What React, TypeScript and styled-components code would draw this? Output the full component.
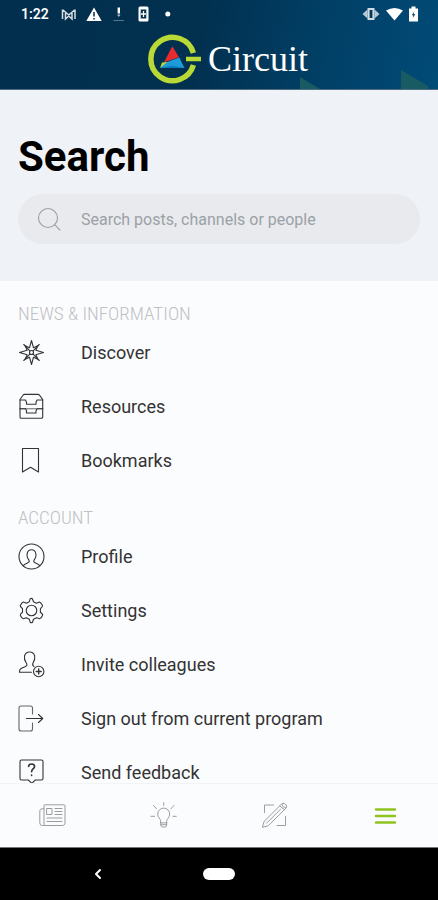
import React from "react";
import styled, { createGlobalStyle } from "styled-components";

const GlobalStyle = createGlobalStyle`
  *, *::before, *::after { box-sizing: border-box; }
  body {
    margin: 0;
    background: #fbfcfe;
    font-family: Roboto, "Liberation Sans", sans-serif;
    color: #2b2b2b;
  }
`;

const Screen = styled.div`
  display: flex;
  flex-direction: column;
  height: 100vh;
`;

const Header = styled.header`
  position: relative;
  flex: none;
  background: linear-gradient(100deg, #022f4e 0%, #02304f 45%, #013e64 70%, #014b77 100%);
  border-bottom: 1px solid #506a80;
  overflow: hidden;
`;

const Triangles = styled.svg`
  position: absolute;
  right: 0;
  bottom: 0;
  width: 140px;
  height: 20px;
`;

const StatusBar = styled.div`
  display: flex;
  align-items: center;
  justify-content: space-between;
  height: 28px;
  padding: 0 18px 0 21px;
  color: #fff;
  font-size: 14px;
  font-weight: 600;
`;

const StatusGroup = styled.div`
  display: flex;
  align-items: center;
  gap: 12px;
`;

const Brand = styled.div`
  display: flex;
  align-items: center;
  justify-content: center;
  gap: 6px;
  height: 61px;
  padding-left: 18px;
  color: #fff;
  font-family: "Liberation Serif", serif;
  font-size: 36px;
  line-height: 60px;
`;

const SearchPanel = styled.section`
  flex: none;
  padding: 42px 18px 37px;
  background: #eff3f7;
`;

const Title = styled.h1`
  margin: 0;
  color: #000;
  font-size: 42px;
  font-weight: 700;
  line-height: 50px;
`;

const SearchField = styled.label`
  display: flex;
  align-items: center;
  gap: 18px;
  height: 50px;
  margin-top: 12px;
  padding: 0 18px;
  border-radius: 25px;
  background: #e8eaed;
  color: #9aa0a5;
`;

const SearchInput = styled.input`
  flex: 1;
  min-width: 0;
  padding: 0;
  border: 0;
  outline: 0;
  background: transparent;
  color: #2b2b2b;
  font: 400 16px Roboto, "Liberation Sans", sans-serif;
  &::placeholder { color: #9ba1a7; opacity: 1; }
`;

const Menu = styled.main`
  flex: 1;
  min-height: 0;
  display: flex;
  flex-direction: column;
  gap: 20px;
  padding: 22px 18px 0;
  overflow-y: auto;
  scrollbar-width: none;
`;

const SectionTitle = styled.h2`
  margin: 0;
  color: #bfc1c3;
  font-family: "Roboto Condensed", Roboto, sans-serif;
  font-size: 19px;
  font-weight: 300;
  line-height: 22px;
`;

const List = styled.ul`
  margin: 0;
  padding: 0;
  list-style: none;
`;

const MenuButton = styled.button`
  display: flex;
  align-items: center;
  gap: 36px;
  width: 100%;
  height: 54px;
  padding: 0;
  border: 0;
  background: transparent;
  color: #333;
  font: 400 18px Roboto, "Liberation Sans", sans-serif;
  text-align: left;
  cursor: pointer;
`;

const Tabs = styled.nav`
  flex: none;
  display: flex;
  justify-content: space-between;
  height: 64px;
  padding: 0 39px;
  border-top: 1px solid #f1f3f5;
  background: #fbfcfe;
`;

const Tab = styled.button<{ $active?: boolean }>`
  display: flex;
  align-items: center;
  justify-content: center;
  padding: 0;
  border: 0;
  background: transparent;
  color: ${(p) => (p.$active ? "#8fc31f" : "#9b9c9d")};
  cursor: pointer;
`;

const SystemBar = styled.footer`
  flex: none;
  display: grid;
  grid-template-columns: 1fr auto 1fr;
  align-items: center;
  height: 53px;
  border-top: 1px solid #777;
  background: #000;
`;

const BackButton = styled.button`
  justify-self: center;
  display: flex;
  margin-right: 8px;
  padding: 0;
  border: 0;
  background: transparent;
  color: #fff;
`;

const HomeButton = styled.button`
  width: 32px;
  height: 12px;
  padding: 0;
  border: 0;
  border-radius: 6px;
  background: #fff;
`;

const Line = styled.svg`
  flex: none;
  fill: none;
  stroke: currentColor;
  stroke-linejoin: round;
  stroke-linecap: round;
`;

type IconProps = { children: React.ReactNode; width?: number; weight?: number };

const Icon = ({ children, width = 27, weight = 1.1 }: IconProps) => (
  <Line width={width} height={width} viewBox="0 0 27 27" strokeWidth={weight} aria-hidden="true">
    {children}
  </Line>
);

const Discover = () => (
  <Icon>
    <path d="M13.5 1.5 15.5 8.8 19.8 6.8 17.9 11.3 25.5 13.5 17.9 15.7 19.8 20.2 15.5 18.2 13.5 25.5 11.5 18.2 7.2 20.2 9.1 15.7 1.5 13.5 9.1 11.3 7.2 6.8 11.5 8.8Z" />
    <path d="M5.8 5.5 11.8 11.8M21.2 5.5l-6 6.3M5.8 21.5l6-6.3M21.2 21.5l-6-6.3" />
    <circle cx="13.5" cy="13.5" r="2" />
  </Icon>
);

const Resources = () => (
  <Icon>
    <path d="M2 6.5 5 2.2Q5.5 1.4 6.5 1.4H20Q21 1.4 21.5 2.2L24.7 6.5V24Q24.7 25.3 23.2 25.3H3.5Q2 25.3 2 24Z" />
    <path d="M2 7H7.5L8.5 9.2V11.3H18V9.2L19 7H24.7M2 15.7H7.5L8.5 17.7V20H18V17.7L19 15.7H24.7" />
    <path d="M2 15.7H24.7" opacity=".7" />
  </Icon>
);

const Bookmark = () => (
  <Icon>
    <path d="M4.5 1.5H20.5V25L12.5 20.3 4.5 25Z" />
  </Icon>
);

const Profile = () => (
  <Icon>
    <circle cx="13.5" cy="13.5" r="12.5" />
    <path d="M5.2 22.8C6 20.6 10.7 20 11.2 18.8 11.5 17.3 10.5 16.5 9.7 15 9 13.6 8.8 12.2 9.2 10.5 9.7 8.2 11.3 6.8 13.5 6.8S17.3 8.2 17.8 10.5C18.2 12.2 18 13.6 17.3 15 16.5 16.5 15.5 17.3 15.8 18.8 16.3 20 21 20.6 21.8 22.8" />
  </Icon>
);

const Settings = () => (
  <Icon>
    <path d="M11.3 4.7 12.2 1.8Q13.3 1 14.4 1.8L15.5 4.7 18.4 6.2 21.4 5 Q22.8 5.2 24.5 8.6 24.8 9.5 22.4 11.6V15.3Q25 17.3 24.6 18.2 23.1 21.6 21.6 21.8L18.5 20.7 15.5 22.3 14.5 25.2Q13.3 26 12.2 25.2L11.3 22.3 8.3 20.7 5.3 21.8Q3.8 21.6 2.3 18.2 2 17.3 4.5 15.3V11.6Q2 9.5 2.3 8.6 4 5.2 5.4 5L8.4 6.2Z" />
    <circle cx="13.5" cy="13.5" r="5.3" />
  </Icon>
);

const Invite = () => (
  <Icon>
    <path d="M13.5 21.3H1.5C1.2 18 3 17.3 6.5 16 9.3 14.8 9.4 13.7 8.3 12 6.8 9.8 5.9 7.8 6.5 5 7.2 2.3 9 1 11.6 1S16 2.3 16.7 5C17.2 7.8 16.4 9.8 15 12 14.2 13.5 14.4 14.5 16 15.4" />
    <circle cx="20.7" cy="20.5" r="5.2" />
    <path d="M20.7 18V23M18.2 20.5H23.2" strokeWidth="1.4" />
  </Icon>
);

const SignOut = () => (
  <Icon>
    <path d="M14.5 9V3Q14.5 1 12.5 1H3Q1 1 1 3V24Q1 26 3 26H12.5Q14.5 26 14.5 24V18" opacity=".75" />
    <path d="M8.5 13.5H24.5M20.5 9.5 24.7 13.5 20.5 17.5" />
  </Icon>
);

const Feedback = () => (
  <Icon>
    <path d="M3.5 1H23.5Q25 1 25 2.5V19.5Q25 21 23.5 21H17.3L13.8 24.3 10.3 21H3.5Q2 21 2 19.5V2.5Q2 1 3.5 1Z" />
    <path d="M10.6 7.5Q10.8 5 13.6 5T16.6 7.5C16.6 9.8 13.6 9.7 13.6 12.8M13.6 16V16.5" strokeWidth="1.6" />
  </Icon>
);

const News = () => (
  <Icon weight={1}>
    <path d="M5 22.5V3.5Q5 2.8 6 2.8H25Q26 2.8 26 3.8V21Q26 23.5 23.5 23.5H3.5Q.8 23.5.8 21V9Q.8 6.8 3 6.8H5" />
    <path d="M8 6.5H13V12.5H8ZM16 6.5H23M16 9.5H23M16 12.5H23M8 16H23M8 19.5H23" />
  </Icon>
);

const Ideas = () => (
  <Icon weight={1}>
    <path d="M10.7 20.5V18.8C10.7 17 7.7 15.7 7.7 12.1A6 6 0 0 1 19.7 12.1C19.7 15.7 16.7 17 16.7 18.8V20.5ZM10.7 20.5V23Q10.7 25.2 13.7 25.2T16.7 23V20.5M11 22.7H16.4" />
    <path d="M13.7.8V3.3M3.5 3.5 6.5 6.7M24 3.5 21 6.7M1 14.3H4.5M23 14.3H26.3" />
  </Icon>
);

const Compose = () => (
  <Icon weight={1}>
    <path d="M3.5 10.5V3H12.5M24.5 14.5V23.5H16" />
    <path d="M1.5 25 3 19.5 20.3 2.3Q21.8.8 23.4 1.5 25.9 2.8 25.7 4.6 25.6 5.5 25 6.1L7.5 23.5ZM18.7 3.9 23.5 7.7M21.8 1.6C20.3 4.4 22.7 6 25.5 5.2M5.5 21.2 19.5 7.2" />
  </Icon>
);

const MenuIcon = () => (
  <Icon weight={2.4}>
    <path d="M4 7.5H23M4 14H23M4 20.5H23" />
  </Icon>
);

const Logo = () => (
  <svg width="54" height="50" viewBox="0 0 54 50" aria-hidden="true">
    <path d="M45.4 19A21.7 21.7 0 1 0 45.4 31" fill="none" stroke="#b8d936" strokeWidth="5.5" />
    <path d="M38 25H53" stroke="#b8d936" strokeWidth="4.5" />
    <path d="M24.3 12.3 31 23.2 16 28.2Z" fill="#ea2a31" />
    <path d="M31.3 23.6 36.5 34H12L17.5 28.6Z" fill="#1c9dd9" />
    <path d="M14 28.5 19.5 28 12 34Z" fill="#b8d936" />
    <path d="M12 34 24 31.5 36.5 34Z" fill="#087fbd" />
  </svg>
);

const NotificationIcons = () => (
  <svg width="110" height="18" viewBox="0 0 110 18" fill="#fff" aria-hidden="true">
    <path d="M1.5 4.5V14M14 4.5V14M2 5 7.8 10 13.5 5M4.5 8V14L7.8 11 11 14V8" fill="none" stroke="#d5dde3" strokeWidth="1.5" />
    <path d="M33 2.5 40.7 16H25.3Z" />
    <path d="M33 7V11.5M33 13V14.5" stroke="#02304f" strokeWidth="1.5" />
    <path d="M57.8 2.5V8.5" stroke="#fff" strokeWidth="2.4" />
    <path d="M56 9.5H59.6L57.8 12Z" opacity=".7" />
    <path d="M52.5 15.5H63" stroke="#54788f" />
    <path d="M79 1.5H86Q87.5 1.5 87.5 3V15Q87.5 16.5 86 16.5H79Q77.5 16.5 77.5 15V3Q77.5 1.5 79 1.5Z" />
    <path d="M79.7 4.5H85.3V13.5H79.7Z" fill="#02304f" />
    <path d="M82.5 6V12M80 9H85" stroke="#fff" strokeWidth="1.3" />
    <circle cx="106.8" cy="9" r="2.5" />
  </svg>
);

const SystemIcons = () => (
  <svg width="58" height="18" viewBox="0 0 58 18" fill="#fff" aria-hidden="true">
    <path d="M5.5 3H12.5V15H5.5Z" fill="#cfdbe3" />
    <path d="M7.6 5H10.4V13H7.6Z" fill="#02365a" />
    <path d="M5.5 4.5V13.5L.5 9ZM12.5 4.5V13.5L17.5 9Z" fill="#b9c9d5" />
    <path d="M24 5.5Q32.5 .5 41 5.5L32.5 15.5Z" />
    <path d="M49.5 1.5H53.5V3.5H56V16.5H47V3.5H49.5Z" />
    <path d="M52.3 6.5 49.8 10.2H51.3L50.8 13 53.3 9.2H51.7Z" fill="#023b61" />
  </svg>
);

const sections = [
  {
    title: "NEWS & INFORMATION",
    items: [
      { label: "Discover", icon: <Discover /> },
      { label: "Resources", icon: <Resources /> },
      { label: "Bookmarks", icon: <Bookmark /> },
    ],
  },
  {
    title: "ACCOUNT",
    items: [
      { label: "Profile", icon: <Profile /> },
      { label: "Settings", icon: <Settings /> },
      { label: "Invite colleagues", icon: <Invite /> },
      { label: "Sign out from current program", icon: <SignOut /> },
      { label: "Send feedback", icon: <Feedback /> },
    ],
  },
];

export default function App() {
  return (
    <>
      <GlobalStyle />
      <Screen>
        <Header>
          <Triangles viewBox="0 0 140 20" aria-hidden="true">
            <path d="M2 8 22 20H2Z" fill="#195b62" />
            <path d="M103 1 130 17V20H103Z" fill="#195b62" />
          </Triangles>
          <StatusBar>
            <StatusGroup>
              <span>1:22</span>
              <NotificationIcons />
            </StatusGroup>
            <SystemIcons />
          </StatusBar>
          <Brand>
            <Logo />
            <span>Circuit</span>
          </Brand>
        </Header>
        <SearchPanel>
          <Title>Search</Title>
          <SearchField>
            <Icon>
              <circle cx="12" cy="12" r="9.5" />
              <path d="M18.9 18.9 23.8 24" />
            </Icon>
            <SearchInput
              type="text"
              aria-label="Search"
              placeholder="Search posts, channels or people"
            />
          </SearchField>
        </SearchPanel>
        <Menu>
          {sections.map((section) => (
            <section key={section.title}>
              <SectionTitle>{section.title}</SectionTitle>
              <List>
                {section.items.map((item) => (
                  <li key={item.label}>
                    <MenuButton type="button">
                      {item.icon}
                      <span>{item.label}</span>
                    </MenuButton>
                  </li>
                ))}
              </List>
            </section>
          ))}
        </Menu>
        <Tabs>
          <Tab type="button" aria-label="News"><News /></Tab>
          <Tab type="button" aria-label="Ideas"><Ideas /></Tab>
          <Tab type="button" aria-label="Compose"><Compose /></Tab>
          <Tab type="button" aria-label="Menu" $active><MenuIcon /></Tab>
        </Tabs>
        <SystemBar>
          <BackButton type="button" aria-label="Back">
            <Line width="14" height="14" viewBox="0 0 14 14" strokeWidth="2" aria-hidden="true">
              <path d="M9 3 5 7 9 11" />
            </Line>
          </BackButton>
          <HomeButton type="button" aria-label="Home" />
        </SystemBar>
      </Screen>
    </>
  );
}
